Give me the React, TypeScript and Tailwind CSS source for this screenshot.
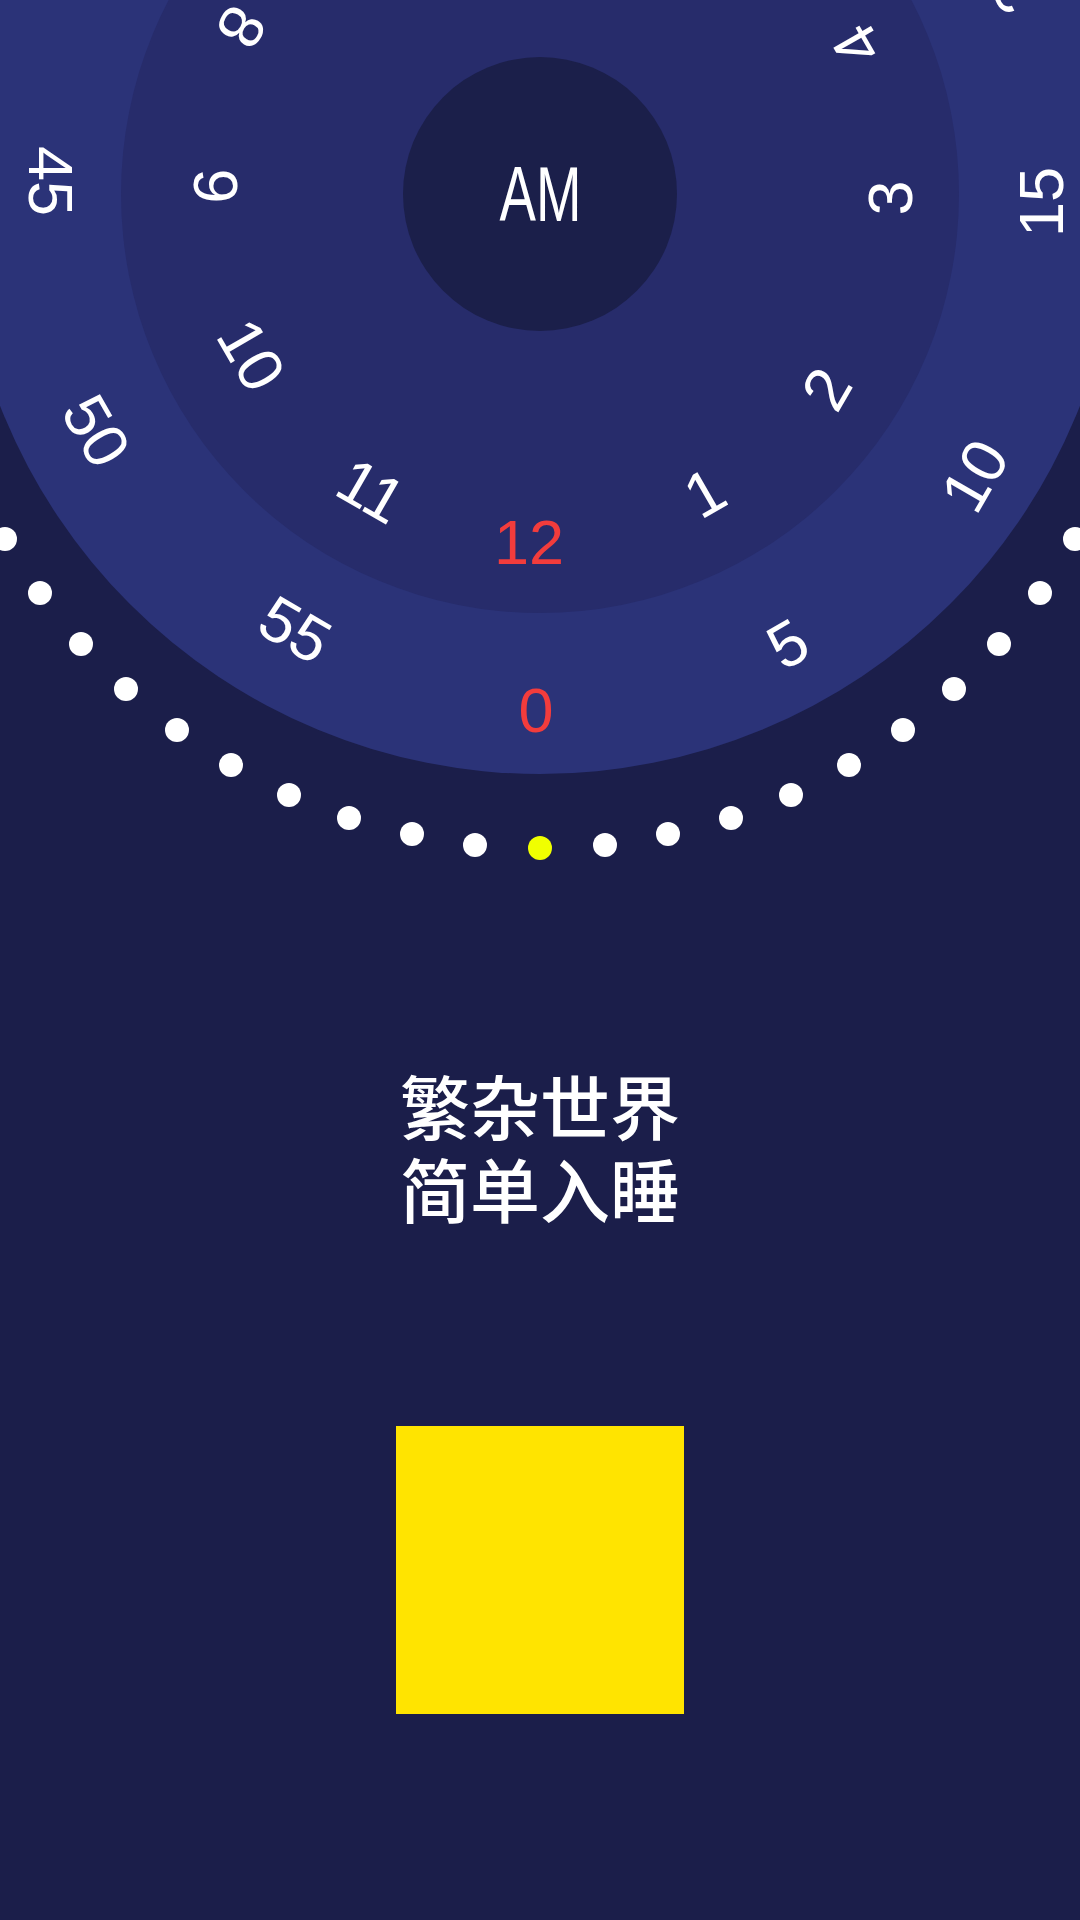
import React from 'react';

type Label = { t: string; a: number; x: number; y: number; on?: boolean };

// hour ring, positions are label centres on the page
const hours: Label[] = [
  { t: '8', a: 240, x: 241, y: 27 },
  { t: '9', a: 270, x: 215, y: 186 },
  { t: '10', a: 300, x: 251, y: 355 },
  { t: '11', a: 330, x: 371, y: 491 },
  { t: '12', a: 0, x: 529, y: 542, on: true },
  { t: '1', a: 30, x: 705, y: 493 },
  { t: '2', a: 60, x: 827, y: 389 },
  { t: '3', a: 90, x: 890, y: 198 },
  { t: '4', a: 120, x: 857, y: 45 },
];

// minute ring
const minutes: Label[] = [
  { t: '45', a: 270, x: 50, y: 181 },
  { t: '50', a: 300, x: 96, y: 431 },
  { t: '55', a: 330, x: 295, y: 630 },
  { t: '0', a: 0, x: 536, y: 710, on: true },
  { t: '5', a: 30, x: 788, y: 644 },
  { t: '10', a: 60, x: 975, y: 476 },
  { t: '15', a: 90, x: 1041, y: 202 },
  { t: '20', a: 120, x: 1008, y: -22 },
];

const DOT_CX = 540;
const DOT_CY = 230;
const DOT_R = 618;

const dots = Array.from({ length: 60 }, (_, i) => {
  const rad = (i * 6 * Math.PI) / 180;
  return { i, x: DOT_CX + DOT_R * Math.sin(rad), y: DOT_CY + DOT_R * Math.cos(rad) };
}).filter((d) => d.x > -20 && d.x < 1100 && d.y > 0);

function DialLabel({ item }: { item: Label }) {
  return (
    <span
      className={`absolute whitespace-nowrap text-[63px] leading-none ${
        item.on ? 'text-[#f23c3c]' : 'text-white'
      }`}
      style={{
        left: item.x,
        top: item.y,
        transform: `translate(-50%, -50%) rotate(${-item.a}deg)`,
      }}
    >
      {item.t}
    </span>
  );
}

export default function App() {
  return (
    <div className="relative flex h-[1920px] w-[1080px] flex-col items-center overflow-hidden bg-[#1b1e4a] font-['Liberation_Sans',sans-serif]">
      {/* Dial */}
      <div className="relative h-[1063px] w-full shrink-0">
        <div className="absolute left-[-40px] top-[-386px] flex h-[1160px] w-[1160px] items-center justify-center rounded-full bg-[#2b3378]">
          <div className="flex h-[838px] w-[838px] items-center justify-center rounded-full bg-[#272c6b]">
            <div className="flex h-[274px] w-[274px] items-center justify-center rounded-full bg-[#1b1f4a]">
              <span className="inline-block scale-x-[0.7] text-[78px] leading-none text-white">AM</span>
            </div>
          </div>
        </div>

        {hours.map((h) => (
          <DialLabel key={'h' + h.t} item={h} />
        ))}
        {minutes.map((m) => (
          <DialLabel key={'m' + m.t} item={m} />
        ))}

        {dots.map((d) => (
          <span
            key={d.i}
            className={`absolute h-6 w-6 -translate-x-1/2 -translate-y-1/2 rounded-full ${
              d.i === 0 ? 'bg-[#f0ff00]' : 'bg-white'
            }`}
            style={{ left: d.x, top: d.y }}
          />
        ))}
      </div>

      {/* Slogan */}
      <div className="text-center font-['Noto_Sans_CJK_SC',sans-serif] text-[70px] font-medium leading-[83px] text-white">
        <div>繁杂世界</div>
        <div>简单入睡</div>
      </div>

      {/* Start button */}
      <div className="mt-[197px] h-[288px] w-[288px] bg-[#ffe400]" />
    </div>
  );
}
